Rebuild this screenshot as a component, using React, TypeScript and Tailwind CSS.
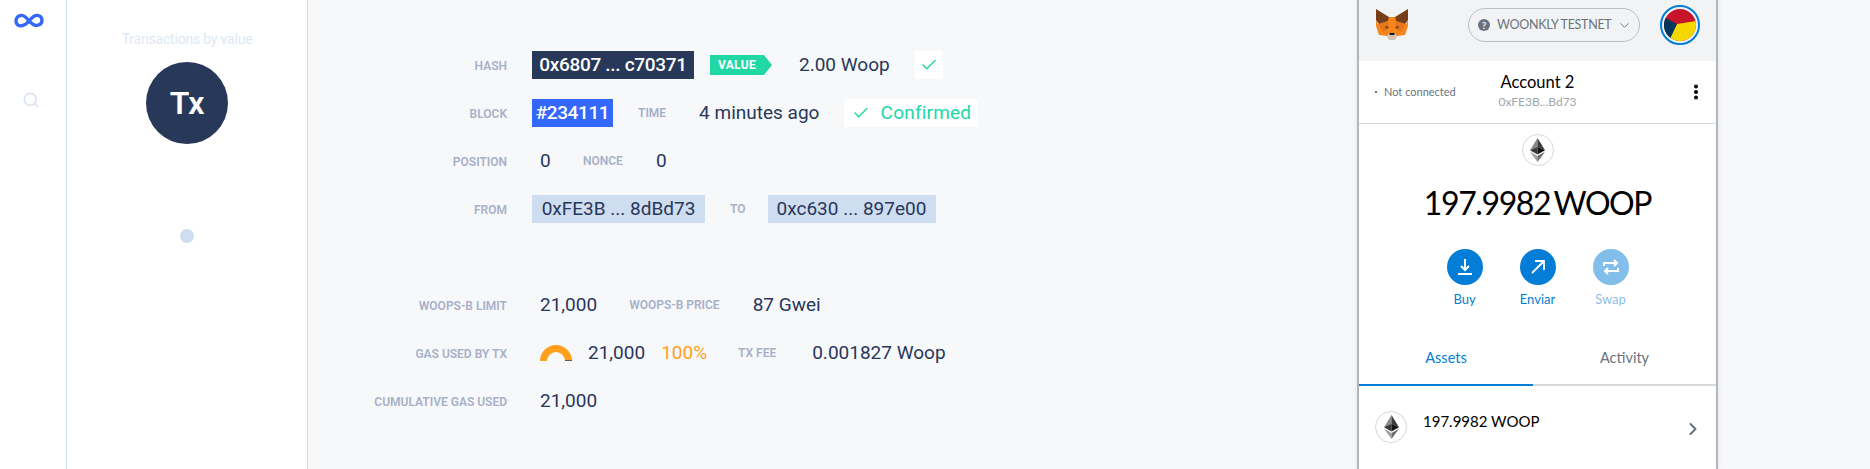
import { Check, ChevronDown, ChevronRight, Search } from 'lucide-react'

const Label = ({ children, className = '' }: { children: React.ReactNode; className?: string }) => (
  <span className={`text-[12px] font-semibold uppercase leading-none whitespace-nowrap text-[#a7b0c8] ${className}`}>{children}</span>
)

const Pill = ({ children, className = '' }: { children: React.ReactNode; className?: string }) => (
  <span className={`flex h-7 items-center justify-center whitespace-nowrap ${className}`}>{children}</span>
)

function Row({ label, children }: { label: string; children: React.ReactNode }) {
  return (
    <div className="flex h-12 items-center">
      <div className="w-[199px] shrink-0 text-right leading-none">
        <Label>{label}</Label>
      </div>
      <div className="ml-[25px] flex items-center text-[19px] text-[#27375a]">{children}</div>
    </div>
  )
}

function EthIcon() {
  return (
    <div className="flex h-8 w-8 items-center justify-center rounded-full border border-[#d6d9dc] bg-white">
      <svg width="15" height="24" viewBox="0 0 15 24">
        <path d="M7.5 0L0 12.2l7.5-3.4z" fill="#8a8a8a" />
        <path d="M7.5 0L15 12.2 7.5 8.8z" fill="#3c3c3d" />
        <path d="M0 12.2l7.5 4.4V8.8z" fill="#393939" />
        <path d="M15 12.2l-7.5 4.4V8.8z" fill="#141414" />
        <path d="M0 13.8L7.5 24v-6z" fill="#a0a0a0" />
        <path d="M15 13.8L7.5 24v-6z" fill="#6c6c6c" />
      </svg>
    </div>
  )
}

function Fox() {
  return (
    <svg width="34" height="32" viewBox="0 0 34 32">
      <path d="M14 9h6l2 4 9 3 2-4 0 6-3 9-8 1-5 1-5-1-8-1-3-9 0-6 2 4 9-3z" fill="#f6851b" />
      <path d="M1 1l13 8-1 4-9 3-3-4z" fill="#763d16" />
      <path d="M33 1L20 9l1 4 9 3 3-4z" fill="#763d16" />
      <path d="M4 16l9-3 1 8-6 3z M30 16l-9-3-1 8 6 3z" fill="#e4761b" />
      <path d="M10 18l4 1-3 2z M24 18l-4 1 3 2z" fill="#763d16" />
      <path d="M12 28l2-3h6l2 3-2 4h-6z" fill="#d7c1b3" />
      <path d="M14 25h6l-1 2h-4z" fill="#161616" />
    </svg>
  )
}

function ActionButton({ label, dim, children }: { label: string; dim?: boolean; children: React.ReactNode }) {
  return (
    <div className="flex w-[73px] flex-col items-center">
      <div className={`flex h-9 w-9 items-center justify-center rounded-full ${dim ? 'bg-[#037dd6]/50' : 'bg-[#037dd6]'}`}>
        {children}
      </div>
      <span className={`mt-[5px] text-[13px] leading-[18px] ${dim ? 'text-[#037dd6]/50' : 'text-[#037dd6]'}`}>{label}</span>
    </div>
  )
}

function Wallet() {
  return (
    <div className="ml-auto mr-[152px] w-[361px] shrink-0 border-x-2 border-[#b3b5b8] bg-white font-['Lato',sans-serif] shadow-[0_0_6px_rgba(0,0,0,0.08)]">
      <div className="flex h-[61px] items-start bg-[#f2f3f4] pl-[16px] pr-[8px] pt-2">
        <Fox />
        <div className="ml-[59px] flex h-[34px] w-[172px] items-center rounded-full border border-[#bbc0c5] pl-[8px] pr-[7px] text-[#6a737d]">
          <svg width="14" height="14" viewBox="0 0 14 14" className="shrink-0">
            <circle cx="7" cy="7" r="6" fill="#6a737d" />
            <text x="7" y="10.5" textAnchor="middle" fontSize="10" fontWeight="700" fill="#f2f3f4">?</text>
          </svg>
          <span className="ml-[6px] whitespace-nowrap text-[12.5px] tracking-[-0.3px]">WOONKLY TESTNET</span>
          <ChevronDown size={15} strokeWidth={1.5} className="ml-auto shrink-0" />
        </div>
        <div className="ml-[20px] -mt-[3px] h-10 w-10 rounded-full border-2 border-[#037dd6] p-[2px]">
          <svg viewBox="0 0 32 32" className="h-full w-full rounded-full">
            <rect width="32" height="32" fill="#c8142a" />
            <path d="M13 15L32 12V32H0V32L13 15z" fill="#f4d800" />
            <path d="M0 8L13 15 5 32H0z" fill="#03365c" />
          </svg>
        </div>
      </div>

      <div className="relative flex h-[63px] items-center justify-between border-b border-[#d6d9dc] pl-[16px] pr-[16px]">
        <div className="flex items-center text-[11px] text-[#6a737d]">
          <span className="h-[2px] w-[2px] bg-[#6a737d]" />
          <span className="ml-[7px] mt-[1px]">Not connected</span>
        </div>
        <div className="absolute left-0 right-0 top-[11px] flex flex-col items-center leading-none">
          <span className="text-[16.5px] leading-[20px] text-black">Account 2</span>
          <span className="mt-[3px] text-[12px] leading-[14px] text-[#9fa6ae]">0xFE3B...Bd73</span>
        </div>
        <svg width="6" height="16" viewBox="0 0 6 16" className="mr-[1px]">
          <circle cx="3" cy="2.5" r="2" fill="#000" />
          <circle cx="3" cy="8" r="2" fill="#000" />
          <circle cx="3" cy="13.5" r="2" fill="#000" />
        </svg>
      </div>

      <div className="flex flex-col items-center pt-[10px]">
        <EthIcon />
        <div className="mt-[17px] text-[32px] leading-[40px] tracking-[-1.4px] [word-spacing:-3px] text-black">197.9982 WOOP</div>
        <div className="mt-[26px] flex items-start">
          <ActionButton label="Buy">
            <svg width="18" height="18" viewBox="0 0 18 18" fill="none" stroke="#fff" strokeWidth="2">
              <path d="M9 1v11M5 8l4 4 4-4M2 16h14" />
            </svg>
          </ActionButton>
          <ActionButton label="Enviar">
            <svg width="16" height="16" viewBox="0 0 16 16" fill="none" stroke="#fff" strokeWidth="1.8">
              <path d="M2 14L14 2M5 2h9v9" />
            </svg>
          </ActionButton>
          <ActionButton label="Swap" dim>
            <svg width="18" height="16" viewBox="0 0 18 16" fill="none" stroke="#fff" strokeWidth="2">
              <path d="M2 7V4h13M12 1l3 3-3 3M16 9v3H3M6 9l-3 3 3 3" />
            </svg>
          </ActionButton>
        </div>
      </div>

      <div className="mt-[25px] flex h-[53px] border-b-2 border-[#d6d9dc] text-[14.5px]">
        <div className="-mb-[2px] flex w-[174px] items-center justify-center border-b-2 border-[#037dd6] pb-[1px] text-[#037dd6]">Assets</div>
        <div className="flex flex-1 items-center justify-center pb-[1px] text-[#6a737d]">Activity</div>
      </div>

      <div className="flex items-start pl-4 pr-4 pt-[25px]">
        <EthIcon />
        <span className="ml-4 mt-0 text-[15px] leading-[20px] text-black">197.9982 WOOP</span>
        <ChevronRight size={20} strokeWidth={2.5} className="ml-auto mt-[8px] -mr-[3px] text-[#6a737d]" />
      </div>
    </div>
  )
}

export default function App() {
  return (
    <div className="flex h-[469px] w-[1870px] overflow-hidden bg-[#f7f8fa] font-['Roboto',sans-serif]">
      <aside className="flex w-[67px] shrink-0 flex-col items-center border-r border-[#cfddf0] bg-white pt-[12px]">
        <svg width="30" height="18" viewBox="0 0 30 18" fill="none" stroke="#3467fb" strokeWidth="3.4" className="-ml-[8px]">
          <path d="M15 9C12 5 10 3 7 3.4 3.6 3.8 2 6.4 2 9c0 3 2.4 5.2 5.6 4.8C10.6 13.4 12.6 12 15 9c2.4-3 4.400-5.200 7.400-5.600C25.600 3 28 5.400 28 8c0 3-1.800 5-5 5.400-3 .4-5-1.400-8-4.400z" />
        </svg>
        <Search size={18} strokeWidth={2} className="-ml-[4px] mt-[61px] text-[#d5e1f3]" />
      </aside>

      <section className="flex w-[241px] shrink-0 flex-col items-center border-r border-[#cfddf0] bg-white pt-[29px]">
        <span className="text-[14px] leading-5 tracking-[-0.2px] text-[#e0e8f6]">Transactions by value</span>
        <div className="mt-[13px] flex h-[82px] w-[82px] items-center justify-center rounded-full bg-[#283858] text-[32px] font-semibold text-white">
          Tx
        </div>
        <div className="mt-[85px] h-[14px] w-[14px] rounded-full bg-[#cfddf0]" />
      </section>

      <main className="flex-1 pt-[41px]">
        <Row label="Hash">
          <Pill className="w-[162px] bg-[#283858] font-medium tracking-[-0.3px] text-white">0x6807 ... c70371</Pill>
          <span className="relative ml-4 flex h-5 w-[54px] items-center justify-center bg-[#21d8a5] text-[12px] font-bold tracking-[0.3px] text-white">
            VALUE
            <span className="absolute left-full top-0 h-0 w-0 border-y-[10px] border-l-[8px] border-y-transparent border-l-[#21d8a5]" />
          </span>
          <span className="ml-[35px] whitespace-nowrap">2.00 Woop</span>
          <Pill className="ml-[25px] w-7 bg-white">
            <Check size={18} strokeWidth={2} className="text-[#21d8a5]" />
          </Pill>
        </Row>
        <Row label="Block">
          <Pill className="w-[81px] bg-[#3467fb] font-medium tracking-[-0.4px] text-white">#234111</Pill>
          <Label className="ml-[25px]">Time</Label>
          <span className="ml-[33px] whitespace-nowrap">4 minutes ago</span>
          <Pill className="ml-[25px] w-[134px] bg-white tracking-[0.2px] text-[#21d8a5]">
            <Check size={18} strokeWidth={2} className="mr-[11px]" />
            Confirmed
          </Pill>
        </Row>
        <Row label="Position">
          <span className="ml-2 w-[11px]">0</span>
          <Label className="ml-8">Nonce</Label>
          <span className="ml-[33px]">0</span>
        </Row>
        <Row label="From">
          <Pill className="w-[173px] bg-[#cfddf0]">0xFE3B ... 8dBd73</Pill>
          <Label className="ml-[25px]">To</Label>
          <Pill className="ml-[22px] w-[168px] bg-[#cfddf0]">0xc630 ... 897e00</Pill>
        </Row>

        <div className="mt-12">
          <Row label="Woops-B Limit">
            <span className="ml-2">21,000</span>
            <Label className="ml-8">Woops-B Price</Label>
            <span className="ml-[33px] whitespace-nowrap">87 Gwei</span>
          </Row>
          <Row label="Gas Used by Tx">
            <svg width="32" height="16" viewBox="0 0 32 16" className="ml-2">
              <path d="M0 16A16 16 0 0 1 32 16H25A9 9 0 0 0 7 16z" fill="#ff9f1c" />
              <rect x="25" y="15.300" width="7" height="0.700" fill="#27375a" />
            </svg>
            <span className="ml-4">21,000</span>
            <span className="ml-4 text-[#ff9f1c]">100%</span>
            <Label className="ml-[31px]">Tx Fee</Label>
            <span className="ml-[36px] whitespace-nowrap">0.001827 Woop</span>
          </Row>
          <Row label="Cumulative Gas Used">
            <span className="ml-2">21,000</span>
          </Row>
        </div>
      </main>

      <Wallet />
    </div>
  )
}
